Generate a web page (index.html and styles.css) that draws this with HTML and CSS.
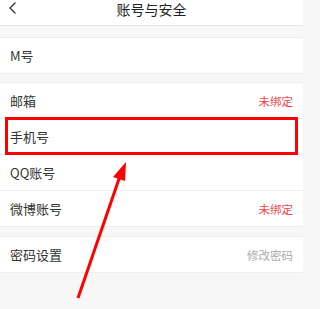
FILE: index.html
```html
<!DOCTYPE html>
<html lang="zh">
<head>
<meta charset="utf-8">
<link rel="stylesheet" href="styles.css">
</head>
<body>
<div class="page">
  <header class="header">
    <svg class="back" width="10" height="14" viewBox="0 0 10 14"><path d="M7.5 1.5 L2 7 L7.5 12.5" fill="none" stroke="#333" stroke-width="1.3"/></svg>
    <div class="title">账号与安全</div>
  </header>
  <section class="group g1">
    <div class="row"><span class="label">M号</span></div>
  </section>
  <section class="group g2">
    <div class="row"><span class="label">邮箱</span><span class="value red">未绑定</span></div>
    <div class="row"><span class="label">手机号</span></div>
    <div class="row"><span class="label">QQ账号</span></div>
    <div class="row"><span class="label">微博账号</span><span class="value red">未绑定</span></div>
  </section>
  <section class="group g3">
    <div class="row"><span class="label">密码设置</span><span class="value grey">修改密码</span></div>
  </section>
  <div class="highlight"></div>
  <svg class="arrow" width="303" height="309" viewBox="0 0 303 309">
    <line x1="78" y1="298" x2="120" y2="176" stroke="#ff0000" stroke-width="3"/>
    <polygon points="126,162 113,177 125,181" fill="#ff0000"/>
  </svg>
</div>
</body>
</html>
```
FILE: styles.css
```css
html, body {
  margin: 0;
  padding: 0;
}
body {
  background: #f7f7f7;
  font-family: "Noto Sans CJK SC", "Noto Sans", sans-serif;
  height: 309px;
  overflow: hidden;
}
.page {
  position: relative;
  width: 303px;
  height: 309px;
}
.header {
  position: relative;
  height: 25px;
  background: #fff;
  border-bottom: 1px solid #e6e6e6;
  display: flex;
  justify-content: center;
}
.back {
  position: absolute;
  left: 8px;
  top: 1px;
}
.title {
  font-size: 14px;
  line-height: 18px;
  color: #222;
}
.group {
  background: #fff;
  border-top: 1px solid #ededed;
  border-bottom: 1px solid #ededed;
}
.g1 { margin-top: 11px; }
.g2 { margin-top: 8px; }
.g3 { margin-top: 9px; }
.row {
  height: 35px;
  display: flex;
  align-items: center;
  justify-content: space-between;
  padding: 0 10px;
  position: relative;
}
.g2 .row + .row {
  border-top: 1px solid #efefef;
}
.label {
  font-size: 13px;
  color: #333;
}
.value {
  font-size: 11.5px;
}
.red { color: #f0474c; }
.grey { color: #aaa; }
.highlight {
  position: absolute;
  left: 5px;
  top: 117px;
  width: 287px;
  height: 32px;
  border: 3px solid #ff0000;
}
.arrow {
  position: absolute;
  left: 0;
  top: 0;
}
```
